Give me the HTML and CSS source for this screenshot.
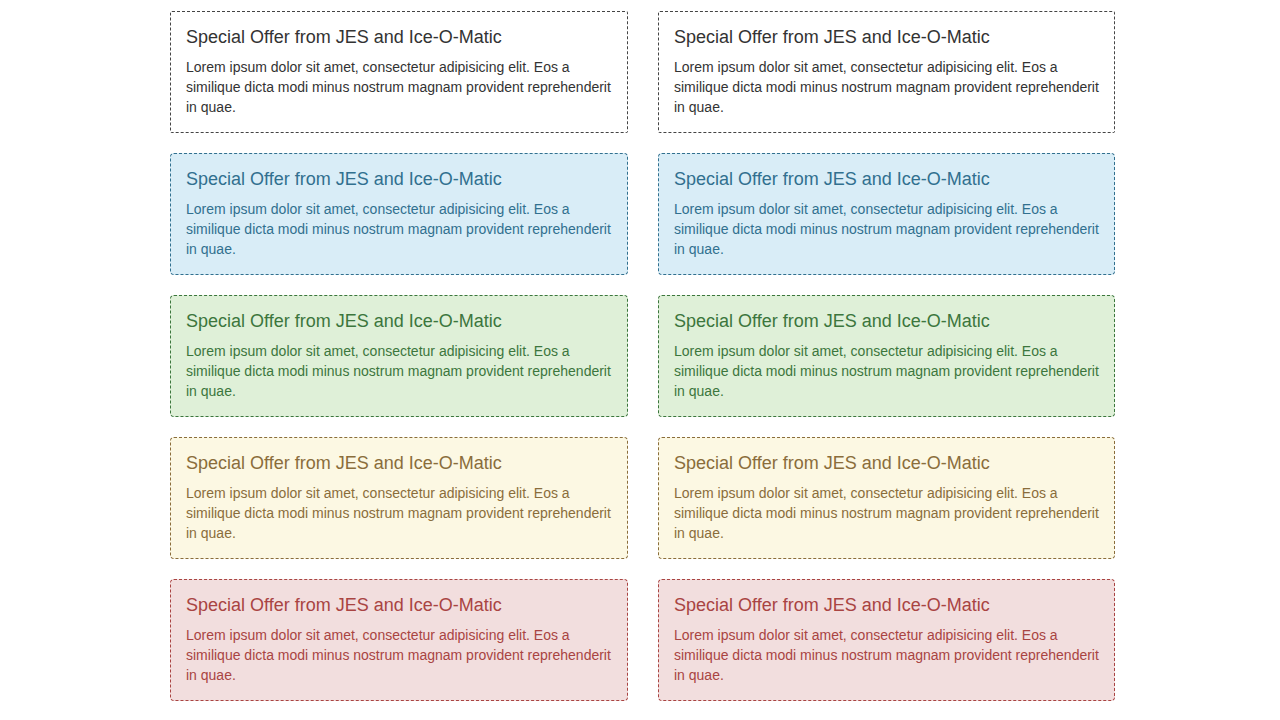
FILE: index.html
```html
<!DOCTYPE html>
<html>
<head>
<meta charset="utf-8">
<link rel="stylesheet" href="styles.css">
</head>
<body>
<div class="grid">
  <div class="callout plain"><h4>Special Offer from JES and Ice-O-Matic</h4><p>Lorem ipsum dolor sit amet, consectetur adipisicing elit. Eos a similique dicta modi minus nostrum magnam provident reprehenderit in quae.</p></div>
  <div class="callout plain"><h4>Special Offer from JES and Ice-O-Matic</h4><p>Lorem ipsum dolor sit amet, consectetur adipisicing elit. Eos a similique dicta modi minus nostrum magnam provident reprehenderit in quae.</p></div>
  <div class="callout info"><h4>Special Offer from JES and Ice-O-Matic</h4><p>Lorem ipsum dolor sit amet, consectetur adipisicing elit. Eos a similique dicta modi minus nostrum magnam provident reprehenderit in quae.</p></div>
  <div class="callout info"><h4>Special Offer from JES and Ice-O-Matic</h4><p>Lorem ipsum dolor sit amet, consectetur adipisicing elit. Eos a similique dicta modi minus nostrum magnam provident reprehenderit in quae.</p></div>
  <div class="callout success"><h4>Special Offer from JES and Ice-O-Matic</h4><p>Lorem ipsum dolor sit amet, consectetur adipisicing elit. Eos a similique dicta modi minus nostrum magnam provident reprehenderit in quae.</p></div>
  <div class="callout success"><h4>Special Offer from JES and Ice-O-Matic</h4><p>Lorem ipsum dolor sit amet, consectetur adipisicing elit. Eos a similique dicta modi minus nostrum magnam provident reprehenderit in quae.</p></div>
  <div class="callout warning"><h4>Special Offer from JES and Ice-O-Matic</h4><p>Lorem ipsum dolor sit amet, consectetur adipisicing elit. Eos a similique dicta modi minus nostrum magnam provident reprehenderit in quae.</p></div>
  <div class="callout warning"><h4>Special Offer from JES and Ice-O-Matic</h4><p>Lorem ipsum dolor sit amet, consectetur adipisicing elit. Eos a similique dicta modi minus nostrum magnam provident reprehenderit in quae.</p></div>
  <div class="callout danger"><h4>Special Offer from JES and Ice-O-Matic</h4><p>Lorem ipsum dolor sit amet, consectetur adipisicing elit. Eos a similique dicta modi minus nostrum magnam provident reprehenderit in quae.</p></div>
  <div class="callout danger"><h4>Special Offer from JES and Ice-O-Matic</h4><p>Lorem ipsum dolor sit amet, consectetur adipisicing elit. Eos a similique dicta modi minus nostrum magnam provident reprehenderit in quae.</p></div>
</div>
</body>
</html>
```
FILE: styles.css
```css
html, body {
  margin: 0;
  padding: 0;
  background: #fff;
}
body {
  font-family: "Liberation Sans", Arial, Helvetica, sans-serif;
  font-size: 14px;
  line-height: 20px;
  color: #333;
}
.grid {
  display: grid;
  grid-template-columns: 458px 457px;
  column-gap: 30px;
  row-gap: 20px;
  width: 945px;
  margin-left: 170px;
  padding-top: 11px;
}
.callout {
  border: 1px dashed #333;
  padding: 15px;
  border-radius: 4px;
}
.callout h4 {
  margin: 0 0 10px;
  font-size: 18px;
  font-weight: 500;
  line-height: 20px;
}
.callout p {
  margin: 0;
}
.plain {
  background: #fff;
  color: #333;
  border-color: #444;
  border-radius: 2px;
}
.info {
  background: #d9edf7;
  color: #31708f;
  border-color: #31708f;
}
.success {
  background: #dff0d8;
  color: #3c763d;
  border-color: #3c763d;
}
.warning {
  background: #fcf8e3;
  color: #8a6d3b;
  border-color: #8a6d3b;
}
.danger {
  background: #f2dede;
  color: #a94442;
  border-color: #a94442;
}
```
